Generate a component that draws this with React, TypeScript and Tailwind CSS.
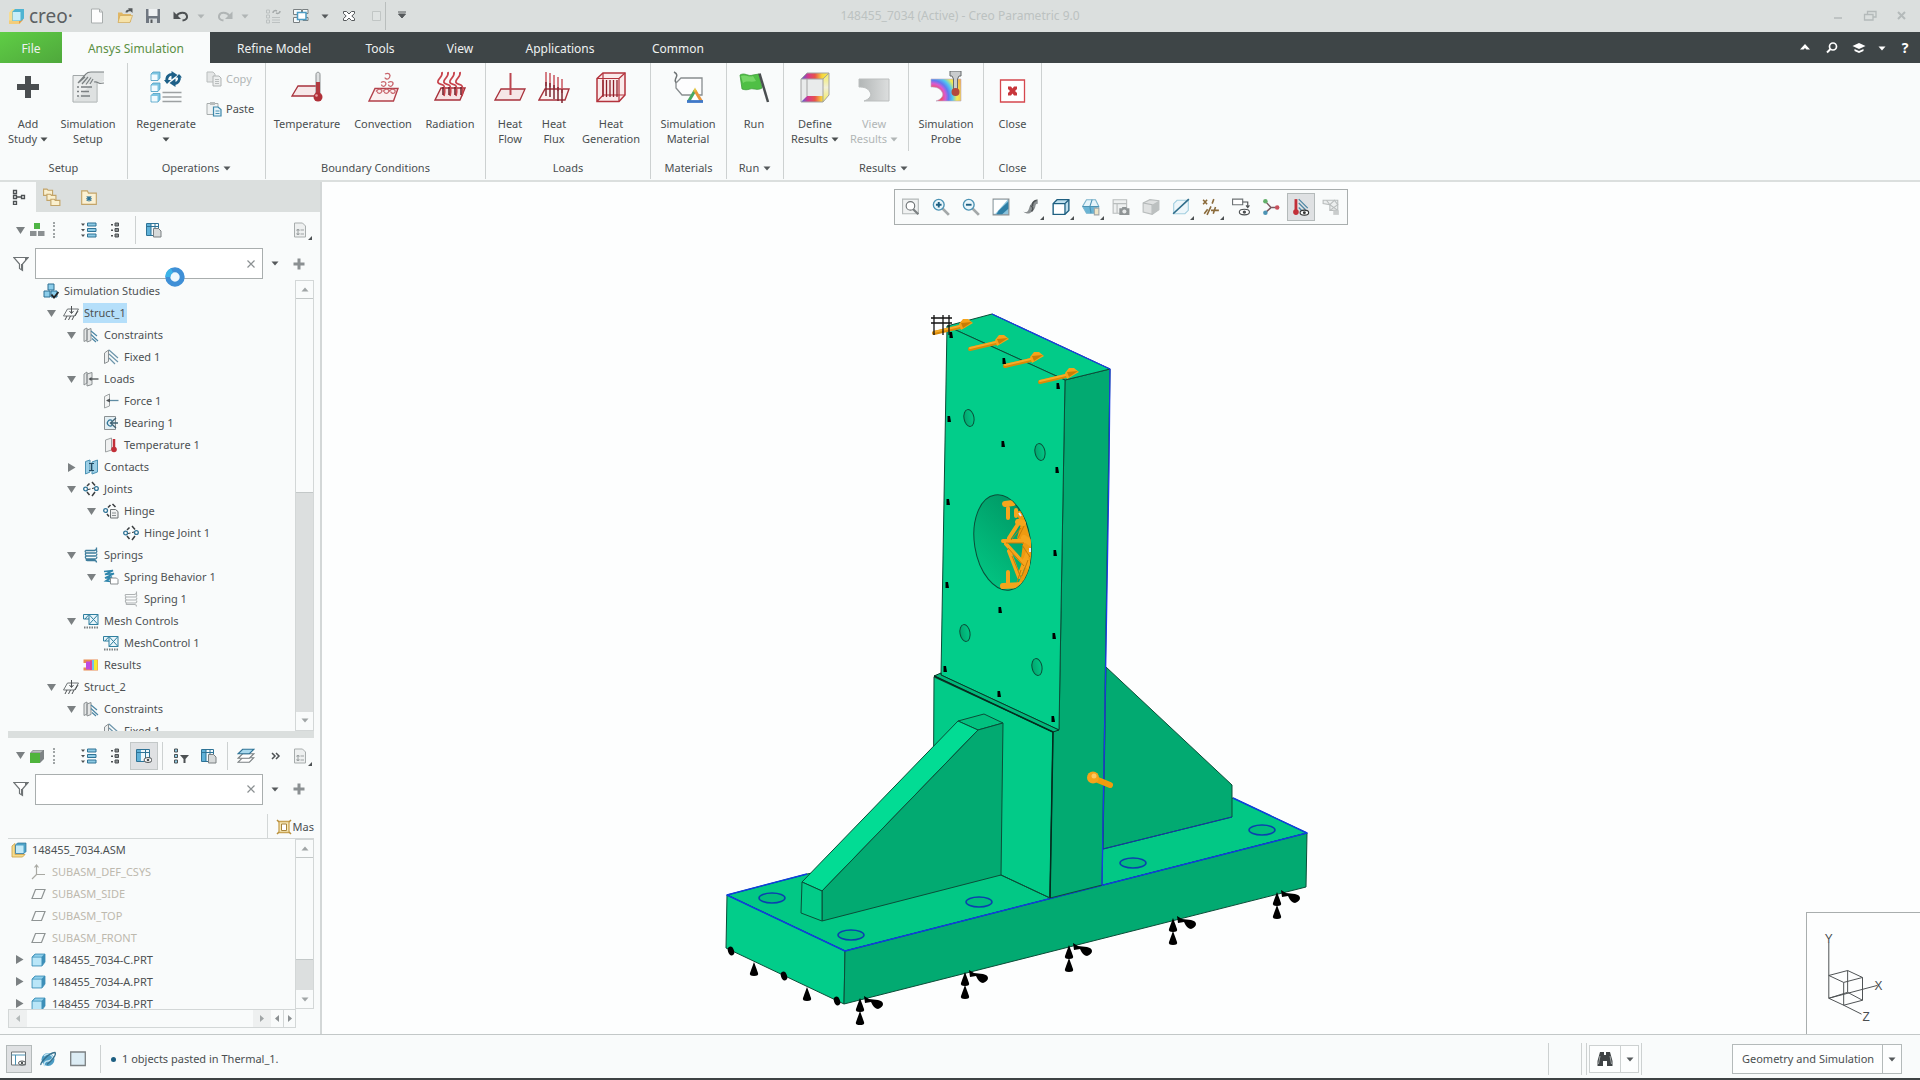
import React, { ReactNode } from 'react';
import clsx from 'clsx';

type IconProps = { children: ReactNode; size?: 16 | 32 | 20 };

const Svg = ({ children, size = 16 }: IconProps) => (
  <svg
    viewBox={size === 32 ? '0 0 32 32' : '0 0 16 16'}
    fill="none"
    className={clsx('shrink-0', size === 32 && 'h-8 w-8', size === 16 && 'h-4 w-4', size === 20 && 'h-[18px] w-[18px]')}
  >
    {children}
  </svg>
);

const Caret = ({ className = 'text-[#55595b]' }: { className?: string }) => (
  <svg viewBox="0 0 8 5" className={clsx('inline-block h-[5px] w-2 shrink-0', className)}>
    <path d="M0.5 0.5h7L4 4.5z" fill="currentColor" />
  </svg>
);

/* ---------- title bar ---------- */

const CreoLogo = () => (
  <svg viewBox="0 0 17 17" fill="none" className="h-[17px] w-[17px]">
    <path d="M1 4.5L4.500 1H9v11h5.500L12 16H1z" fill="#f6dd94" />
    <path d="M1 12.500h10v3.500H1z" fill="#f3cd7a" />
    <path d="M11 16l4-4V9l-4 4z" fill="#e39a48" />
    <path d="M4.500 3.500L7 1h9v9.500L13 13H4.500z" fill="#4fb4d2" />
    <path d="M5 4h7.500v8.500H5z" fill="#c9eef8" />
  </svg>
);

const NewFile = () => (
  <Svg><path d="M2.500 1h8l3 3v11h-11z" fill="#fdfdfd" stroke="#a8adad" /><path d="M10.500 1v3h3" stroke="#a8adad" /></Svg>
);
const OpenFile = () => (
  <Svg>
    <path d="M1 14V4.500h4l1 1.500h8v8z" fill="#e0b765" />
    <path d="M1 14.500l2-7h12.500L13 14.500z" fill="#f6e2a8" stroke="#d0a858" strokeWidth=".7" />
    <path d="M8.500 4.500c0-2 1.500-3 3.500-3L11 .3h4.500V5L14 3.500c-1.500-.5-3 0-3.500 1z" fill="#55595b" />
  </Svg>
);
const SaveFile = () => (
  <Svg>
    <path d="M1 1h14v14H1z" fill="#6f7780" />
    <path d="M3.500 1h9v7h-9z" fill="#eef1f2" />
    <path d="M4 10.500h8V15H4z" fill="#d7dcde" /><path d="M5.500 11.500h2V15h-2z" fill="#55595b" />
  </Svg>
);
const Undo = () => (
  <Svg><path d="M3.500 8C6 4 13 3.500 14 8c.4 2.500-1.500 4-4.500 4.500" stroke="#4d5153" strokeWidth="2" /><path d="M.5 3.500V11h7.500z" fill="#4d5153" /></Svg>
);
const Redo = () => (
  <Svg><path d="M12.500 8C10 4 3 3.500 2 8c-.4 2.500 1.500 4 4.500 4.500" stroke="#b0b5b5" strokeWidth="2" /><path d="M15.500 3.500V11H8z" fill="#b0b5b5" /></Svg>
);
const RegenSmall = () => (
  <Svg>
    <path d="M1.500 2h3v3h-3zM1.500 7h3v3h-3zM1.500 12h3v3h-3zM7 9.500h8M7 12h8M7 14.500h8" stroke="#bcc1c1" />
    <path d="M8 5c0-2 2-3 4-2M15 3c0 2-2 3-4 2" stroke="#a5aaaa" strokeWidth="1.500" />
  </Svg>
);
const Windows = () => (
  <Svg>
    <path d="M.5 1.500h8v5h-8zM.5 9.500h6v5h-6zM9.500 1.500H15v4H9.500zM10 9.500h5v3h-5z" fill="#f6fafb" stroke="#7a8082" />
    <path d="M4.500 4.500h8.500v7H4.500z" fill="#fff" stroke="#4c9cc4" strokeWidth="1.500" />
  </Svg>
);
const CloseWin = () => (
  <Svg><path d="M2.500 3.500h3L8 6l2.500-2.500h3v2L10.800 8l2.700 2.500v2h-3L8 10l-2.500 2.500h-3v-2L5.200 8 2.500 5.500z" fill="#fff" stroke="#55595b" /></Svg>
);
const BlankBox = () => <Svg><path d="M3.500 3.500h8v9h-8z" fill="#dfe3e2" stroke="#c1c6c5" /></Svg>;

/* ---------- ribbon ---------- */

const AddStudy = () => <Svg size={32}><path d="M13 5h6v8h8v6h-8v8h-6v-8H5v-6h8z" fill="#4a4e50" /></Svg>;
const SimSetup = () => (
  <Svg size={32}>
    <path d="M1 4.500h24V31H1z" fill="#eceeee" stroke="#a2a7a8" />
    <path d="M1 31h24V8z" fill="#cfd3d3" opacity=".5" />
    <path d="M5 16h2M5 20.500h2M5 25h2M9 16h11M9 20.500h8M9 25h9" stroke="#7b8082" strokeWidth="1.300" />
    <path d="M6 12l7-8c2-2.500 4-3 7-3h12v9l-4 2c-2 0-4-2-6-1l-3 2z" fill="#dfe2e2" />
    <path d="M6 12l8-9c1-1.500 3-2 5-2h13M6 12l7-6M10 13l6-7M14 13.500l5-7M18 13l3-5M22 11c3-1 4 1 6 1.500l4-.5" stroke="#7b8082" strokeWidth="1.200" />
  </Svg>
);
const cube = (y: number) => (
  <g key={y}>
    <path d={`M1 ${y + 2}l2-2h7v6l-2 2.500H1z`} fill="#7fc6e2" stroke="#4fa0c4" strokeWidth=".8" />
    <path d={`M1.500 ${y + 2.500}h6v5.500h-6z`} fill="#f2fbff" />
  </g>
);
const Regenerate = () => (
  <svg viewBox="0 0 32 32" fill="none" className="h-8 w-8">
    {[1, 12, 22.500].map(cube)}
    <path d="M17 10.500C16 5.500 19 3 23 3.500M29 5c1.500 4-1 7.500-5 7.500" stroke="#1d6088" strokeWidth="2.800" />
    <path d="M21.500 0l6 4-6 4.500zM25.500 7.500v8.500l-6-4z" fill="#1d6088" />
    <path d="M14 9h7l-4 4zM26 6.500h6L29 3z" fill="#1d6088" />
    <path d="M12.500 21.500h19M12.500 26h19M12.500 30.500h19" stroke="#9da1a2" strokeWidth="1.500" />
  </svg>
);
const CopyIcon = () => (
  <Svg><path d="M1 1h6l2 2v8H1z" fill="#e4e6e6" stroke="#b9bdbd" /><path d="M7 5h6l2 2v8H7z" fill="#eceeee" stroke="#b0b4b4" /><path d="M9 8.500h4M9 10.500h4M9 12.500h4" stroke="#b9bdbd" /></Svg>
);
const PasteIcon = () => (
  <Svg>
    <path d="M1 2.500h11v11H1z" fill="#f0f2f2" stroke="#a8adad" /><path d="M4 1h5v3H4z" fill="#b8bcbc" />
    <path d="M7.500 6h4.500L15 8.500V15H7.500z" fill="#e4f3f9" stroke="#3d87aa" strokeWidth="1.200" /><path d="M9.500 10h4M9.500 12.500h4" stroke="#4c93b4" />
  </Svg>
);
const Temperature = () => (
  <Svg size={32}>
    <path d="M7 15h21l-4 10H1z" fill="#f6e8e9" stroke="#a8323c" strokeWidth="1.300" />
    <path d="M25 3.500c0-3 4-3 4 0V23h-4z" fill="#dfe1e2" stroke="#8b8f91" />
    <path d="M25 11h4v13h-4z" fill="#b23a40" />
    <circle cx="27" cy="26" r="4.500" fill="#b03038" /><circle cx="25.500" cy="24.500" r="1.300" fill="#e8a0a4" />
  </Svg>
);
const Convection = () => (
  <Svg size={32}>
    <path d="M8 17.500h23L26.500 30H2z" fill="#fbf1f1" stroke="#b2404a" strokeWidth="1.400" />
    <path d="M18 3c4-2 6 1 4.500 3.500S18 8 18 6.500M14 11.500c3-2 6 0 4.500 2.500s-4 1-4-.5M21 11.500c4-2 6 0 4.500 2.500s-4 1-4-.5M9 20.500c3-4 7-2 5.500.5s-4.500 1-4-.5M16 20.500c3-4 7-2 5.500.5s-4.500 1-4-.5M22 20.500c3-4 7-2 6 .5s-4.500 1-4-.5" stroke="#c9666d" strokeWidth="1.300" />
  </Svg>
);
const Radiation = () => (
  <Svg size={32}>
    <path d="M7 17h24l-5 12H1z" fill="#f6e3e4" stroke="#a8323c" strokeWidth="1.400" />
    {[0, 6, 12, 18].map(x => (
      <path key={x} d={`M${8 + x} 1c1 4-3 6-4 9s3 3 5 4 2 6 1 11`} stroke="#c8444d" strokeWidth="1.800" />
    ))}
    {[9, 15, 21, 27].map(x => <path key={x} d={`M${x} 16v8`} stroke="#6d1f28" strokeWidth="1.500" />)}
  </Svg>
);
const HeatFlow = () => (
  <Svg size={32}><path d="M7 18h24l-5 11H1z" fill="#f6e6e7" stroke="#a8323c" strokeWidth="1.300" /><path d="M16.500 2v22" stroke="#bb4650" strokeWidth="2" /></Svg>
);
const HeatFlux = () => (
  <Svg size={32}>
    <path d="M7 18h24l-4 11H1z" fill="#fbf2f2" stroke="#a8323c" strokeWidth="1.400" />
    {[[8, 1], [12, 2], [16, 4], [20, 6], [24, 8]].map(([x, y]) => (
      <g key={x}><path d={`M${x} ${y}v14`} stroke="#c9555e" strokeWidth="1.500" /><path d={`M${x} ${y + 10}v14`} stroke="#7d2630" strokeWidth="1.500" /></g>
    ))}
  </Svg>
);
const HeatGen = () => (
  <Svg size={32}>
    <path d="M2 7.500L8 2h22v22l-6 6.500H2z" fill="#faeaea" stroke="#b3333c" strokeWidth="1.500" />
    <path d="M2 7.500h22v23M24 7.500L30 2M8 2v22M2 30.500L8 24h22" stroke="#b3333c" strokeWidth="1.200" />
    <path d="M8 9v17M11.500 9v17M15 9v17M18.500 9v17M22 9v17" stroke="#8e1f29" strokeWidth="1.300" />
  </Svg>
);
const SimMaterial = () => (
  <Svg size={32}>
    <path d="M2 1c4 2 3 4 1.500 7S5 13 8 15" stroke="#6e7375" strokeWidth="1.500" />
    <path d="M9 7h21v17H10l-6-7v-5z" fill="#fdfdfe" stroke="#888d8f" strokeWidth="1.300" />
    <path d="M23 17l8.500 15H14.500z" fill="#fff" />
    <path d="M23 19.500l-6.500 11" stroke="#48a860" strokeWidth="3" /><path d="M23 19.500l6.500 11" stroke="#e8953c" strokeWidth="3" /><path d="M15 30.500h16" stroke="#3f78c8" strokeWidth="2.800" />
    <path d="M23 16.500l2 4h-4z" fill="#e0c23c" />
  </Svg>
);
const RunFlag = () => (
  <Svg size={32}>
    <path d="M2 4c5-3 8 2 13 0l6-1 3 14c-5 3-8 0-12 1-3 1-5 1-8 0z" fill="#4fbf45" stroke="#3e9c3a" strokeWidth=".8" />
    <path d="M3 5c5-2 8 2 12 0l3 5c-5 2-9-1-13 2z" fill="#86df76" opacity=".7" />
    <path d="M21.500 2.500L30 31" stroke="#4a4e50" strokeWidth="2.500" />
  </Svg>
);

const DefineResults = () => (
  <Svg size={32}>
    <defs>
      <linearGradient id="def">
        <stop offset="0" stopColor="#4b62e0" /><stop offset=".25" stopColor="#d33a8c" /><stop offset=".5" stopColor="#e8534a" />
        <stop offset=".75" stopColor="#f6d53c" /><stop offset="1" stopColor="#f4ee52" />
      </linearGradient>
      <linearGradient id="side" x2="0" y2="1"><stop stopColor="#f4ec5a" /><stop offset=".5" stopColor="#f1f0d8" /><stop offset="1" stopColor="#f4ec5a" /></linearGradient>
    </defs>
    <path d="M2 8h22v23H2z" fill="#e9ebeb" /><path d="M24 8l6-6v22l-6 7z" fill="url(#side)" />
    <path d="M2 8l6-6h22l-6 6zM2 31l6-6h16v6z" fill="url(#def)" />
    <path d="M2 8l6-6h22v22l-6 7H2zM2 8h22v23M24 8l6-6M8 8v17" stroke="#a3a3a3" />
  </Svg>
);
const resultShape = 'M1 8h30v22H6c6-2 8-6 6-9-2-4-6-5-11-5z';
const ViewResults = () => (
  <Svg size={32}>
    <defs><linearGradient id="vr"><stop stopColor="#b2b6b6" /><stop offset=".4" stopColor="#c3c6c6" /><stop offset="1" stopColor="#dcdede" /></linearGradient></defs>
    <path d={resultShape} fill="url(#vr)" stroke="#bcbfbf" />
  </Svg>
);
const SimProbe = () => (
  <Svg size={32}>
    <defs>
      <radialGradient id="probe" gradientUnits="userSpaceOnUse" cx="2" cy="26" r="32">
        <stop offset=".3" stopColor="#f0506a" /><stop offset=".42" stopColor="#d85ad0" /><stop offset=".52" stopColor="#5f7af0" />
        <stop offset=".64" stopColor="#52c8f0" /><stop offset=".78" stopColor="#f2ea52" /><stop offset="1" stopColor="#f6b24a" />
      </radialGradient>
    </defs>
    <path d={resultShape} fill="url(#probe)" stroke="#b9a7c4" strokeWidth=".6" />
    <path d="M20 0h11v5h-2l-1.500 3v11h-4V8L22 5h-2z" fill="#c9cccd" stroke="#64696b" />
    <circle cx="25.500" cy="21" r="4" fill="#b4483c" />
  </Svg>
);
const CloseIcon = () => (
  <Svg size={32}><path d="M3.500 9h24v22h-24z" fill="#fff" stroke="#d5474e" strokeWidth="1.300" /><path d="M11 15.500h3l1.500 2 1.500-2h3v2.500L18 20l2 2v2.500h-3l-1.500-2-1.500 2h-3V22l2-2-2-2z" fill="#c8373c" /></Svg>
);

/* ---------- side panel ---------- */

const ModelTree = () => <Svg><path d="M1.500 1.500h3v3h-3zM1.500 6.500h3v3h-3zM1.500 12.500h3v3h-3zM9.500 6.500h3v3h-3zM4.500 8h5" stroke="#4d5153" strokeWidth="1.300" /></Svg>;
const Folders = () => (
  <Svg size={20}>{[[0, 1], [3, 5.500], [6.500, 10]].map(([x, y]) => <path key={x} d={`M${x + .5} ${y}h3l1 1h4v4.500h-8z`} fill="#faf0cf" stroke="#c3a468" />)}</Svg>
);
const Favorites = () => (
  <Svg size={20}><path d="M1.500 2.500h5l1 2h7v10h-13z" fill="#fbf1d3" stroke="#c3a468" /><path d="M8 7v5M5.500 9.500h5M6 7.500l4 4M10 7.500l-4 4" stroke="#2f7396" /></Svg>
);
const Blocks = () => <Svg><path d="M5 1h6v6H5z" fill="#4fb445" /><path d="M1 9h6.500v5H1zM9 9h6.500v5H9z" fill="#8b9092" /></Svg>;
const GreenCube = () => <Svg><path d="M1 5l3-3h11v9l-4 4H1z" fill="#7d8384" /><path d="M2 4.500L4.500 2.500H14L11.500 4.500z" fill="#b9bebe" /><path d="M1 5h10v10H1z" fill="#4fb43c" /></Svg>;
const ListWide = () => (
  <Svg>{[1, 6.500, 12].map(y => <g key={y}><path d={`M6.500 ${y}h8.500v3h-8.500z`} fill="#8fcbe4" stroke="#2f7396" /><path d={`M0 ${y + .5}h4L2 ${y + 3}z`} fill="#4d5153" /></g>)}</Svg>
);
const ListNarrow = () => (
  <Svg>{[1, 6.500, 12].map(y => <g key={y}><path d={`M8 ${y}h3.500v3H8z`} fill="#8b9092" stroke="#4d5153" /><path d={`M4 ${y + 1}h2v1.500H4z`} fill="#4d5153" /></g>)}</Svg>
);
const ColumnsDoc = () => (
  <Svg>
    <path d="M.5 1.500h12v12H.5z" fill="#f4fafc" stroke="#2f7396" /><path d="M1 2h4v11H1z" fill="#5fb1d8" />
    <path d="M.5 4.500h12M5 1.500v12M9 1.500v5" stroke="#2f7396" /><path d="M7.500 6.500h5L15 9v6H7.500z" fill="#d7dada" stroke="#7b8082" />
  </Svg>
);
const ColumnsEye = () => (
  <Svg><path d="M.5 1.500h13v12H.5z" fill="#eef7fb" stroke="#2f7396" /><path d="M1 2h4v11H1z" fill="#5fb1d8" /><path d="M.5 4.500h13M9.500 1.500v12" stroke="#2f7396" /><ellipse cx="12" cy="12" rx="4" ry="2.500" fill="#fff" stroke="#4d5153" /><circle cx="12" cy="12" r="1.300" fill="#4d5153" /></Svg>
);
const TreeFilter = () => (
  <Svg><path d="M1.500 1h3v3h-3zM1.500 6.500h3v3h-3zM1.500 12h3v3h-3z" fill="#8fcbe4" stroke="#4d5153" /><path d="M7 7h9l-3.500 4v4h-2v-4z" fill="#4d5153" /></Svg>
);
const Layers = () => (
  <Svg size={20}>
    <path d="M1 13.500l4-4h10l-4 4z" fill="#fff" stroke="#7b8082" /><path d="M1 10l4-4h10l-4 4z" fill="#fff" stroke="#7b8082" />
    <path d="M1 6l4-4h10l-4 4z" fill="#a9d9ee" stroke="#2f7396" />
  </Svg>
);
const DocGrey = () => (
  <Svg><path d="M2.500 1h8l3 3v11h-11z" fill="#eef0f0" stroke="#a8adad" /><path d="M5 7.500h2v1.500H5zM5 11h2v1.500H5zM8.500 8h3.500M8.500 12h3.500" stroke="#9da2a3" /></Svg>
);
const Funnel = () => <Svg><path d="M.8 1.500h14.400L9.500 8v6.500l-3-2V8z" fill="#fff" stroke="#6e7375" strokeWidth="1.200" /><path d="M8 8h1.500v6.500l-1.500-1zM12 1.500h3.200L12 5z" fill="#6e7375" /></Svg>;
const Plus = () => <Svg><path d="M6.500 2.500h3v4h4v3h-4v4h-3v-4h-4v-3h4z" fill="#8b9092" /></Svg>;

const Studies = () => (
  <Svg><path d="M5 1h6v6H5zM1 8h6v6H1zM8 8h6v6H8z" fill="#8ccdea" stroke="#2d6f92" /><path d="M8.500 11.500l2.500 3L15.500 9" stroke="#222" strokeWidth="1.800" /></Svg>
);
const Struct = () => <Svg><path d="M4.500 4h11l-4 7h-11z" stroke="#6e7375" /><path d="M8.500 1v7M6.500 6l2 2.500 2-2.500M4 11l-2 4M7.500 11l-2 4M11 11l-2 4M15 6l-3 5" stroke="#4d5153" /></Svg>;
const Constraint = () => <Svg><path d="M1 2.500L4 1v12l-3 1.500zM4 3l4-1.500v12L4 15z" fill="#e5e7e7" stroke="#8b9092" /><path d="M8 4l6 5M8 7.500l7 6.500M9 11.500l4 3.500" stroke="#4c86a4" strokeWidth="1.200" /></Svg>;
const Fixed = () => <Svg><path d="M1.500 4l4-3v11.500l-4 2z" fill="#edefef" stroke="#8b9092" /><path d="M6 1l9 8M6 5l9 8M6 9l6 6" stroke="#6d95ab" strokeWidth="1.200" /></Svg>;
const Loads = () => <Svg><path d="M1 3l3-2v11l-3 2zM4 3l5-1.500v12L4 15z" fill="#e5e7e7" stroke="#8b9092" /><path d="M7 8h8.500" stroke="#4d5153" strokeWidth="1.300" /><path d="M5.500 8l3-2v4z" fill="#4d5153" /></Svg>;
const Force = () => <Svg><path d="M1.500 3.500l5-2.500v12l-5 2z" fill="#f3f4f4" stroke="#9da2a3" /><path d="M4 7.500h11.500" stroke="#5f8ca3" strokeWidth="1.300" /><path d="M3 7.500l4-2v4z" fill="#4d5153" /></Svg>;
const Bearing = () => <Svg><path d="M1.500 1.500h11v13h-11z" fill="#e3eff4" stroke="#8b9092" /><path d="M9 5.500a3 3 0 1 0 0 5" stroke="#2f7396" strokeWidth="1.200" /><path d="M15 8H7.500M13 3L7.500 8l5.500 5" stroke="#3f6172" strokeWidth="1.300" /></Svg>;
const TempLoad = () => <Svg><path d="M2.500 3l6-2v12l-6 2z" fill="#f0f1f1" stroke="#9da2a3" /><path d="M11 2v9" stroke="#c22f38" strokeWidth="2.500" /><circle cx="11" cy="12.500" r="2.800" fill="#c22f38" /></Svg>;
const Contacts = () => <Svg><path d="M2.500 2.500L7 1v12l-4.500 2zM9 3l5.500-2v12L9 15z" fill="#9ccfe6" stroke="#4c93b4" /><path d="M6 4.500h5M8.500 4.500v7M6 11.500h5" stroke="#234b62" strokeWidth="1.200" /></Svg>;
const Joints = () => (
  <Svg>
    <circle cx="2.600" cy="8" r="1.900" stroke="#2f7396" strokeWidth="1.300" /><circle cx="13.400" cy="7.500" r="1.900" stroke="#2f7396" strokeWidth="1.300" />
    <path d="M5 8.500l2.500-.5M9 7.500l2-.5" stroke="#3a3e40" /><path d="M4 5L6.500 2.500M9 1l3 3.500M4 11l2.500 3M9 15l3-4" stroke="#3a3e40" strokeWidth="1.500" />
  </Svg>
);
const Hinge = () => <Svg><circle cx="2.600" cy="7.500" r="1.900" stroke="#2f7396" strokeWidth="1.300" /><path d="M5 4.500L7.500 2M9.500 1l3 3M4 11l2 2.500" stroke="#3a3e40" strokeWidth="1.500" /><path d="M7.500 6.500h5l2.500 2v6.500H7.500z" fill="#f0f1f1" stroke="#6e7375" /><path d="M9 10h4M9 12.500h4" stroke="#8b9092" /></Svg>;
const springPath = 'M13.500 .5v3M2.500 3.500h9q2-.5 2-2M2.500 3.500q-1 1.500 1 2.500h9q2-1 1-2.500M3 6q-1.500 1.500.5 3h9q2-1 1-2.500M3 9q-1.500 1.500.5 3h9q2-1 1-2.500M3.500 12q-1 1.500 1 1.500h7q2 0 2 2'
const Springs = () => <Svg><path d={springPath} stroke="#3e7d9c" strokeWidth="1.300" /></Svg>;
const Spring = () => <Svg><path d={springPath} stroke="#aeb2b3" strokeWidth="1.100" /></Svg>;
const SpringBehavior = () => <Svg><path d="M1 2.500l9-1-8 4 9-1-9 4.500 7-1-6 4 5 .5" stroke="#2f86ac" strokeWidth="1.700" /><path d="M7.500 9h6l1.500 1.500V15H7.500z" fill="#fff" stroke="#8b9092" /></Svg>;
const Mesh = () => (
  <Svg>
    <path d="M.5 1.500h14.500v10H6V6H.5z" fill="#e8f5fa" stroke="#2f7f9f" /><path d="M6 6V1.500L2 6M6 1.500L15 11.500M15 1.500L6 11.500" stroke="#2f7f9f" />
    <path d="M1 14.500h14" stroke="#7b8082" strokeWidth="2" strokeDasharray="1.500 1" />
  </Svg>
);
const ResultsIcon = () => (
  <Svg><path d="M.5 2.500H15v11H.5v-3h4V6h-4z" fill="#e98b52" /><path d="M3 4.500h4v8H3z" fill="#c04be0" /><path d="M7 3.500h2v9.500H7z" fill="#e0489a" /><path d="M9 3h2v10H9z" fill="#6fc0ee" /><path d="M11 3h3.500v10H11z" fill="#f6ea30" /></Svg>
);
const AsmIcon = () => <Svg><path d="M1 4l3-2.500v11h10L11.500 15H1z" fill="#f6dc8c" stroke="#cfa650" strokeWidth=".9" /><path d="M4.500 3L6.500 1H15v8.500l-2 2H4.500z" fill="#4fa3c8" stroke="#2f7396" strokeWidth=".7" /><path d="M5 3.500h7.500V11H5z" fill="#c3eaf8" /></Svg>;
const Csys = () => <Svg><path d="M5.500 2v8.500H14M5.500 10.500L1 15M3.500 3.500l2-2.500 2 2.500" stroke="#a9a9a3" strokeWidth="1.200" /></Svg>;
const Plane = () => <Svg><path d="M4.500 3.500H14L10.500 12.500H1z" stroke="#8f9494" strokeWidth="1.200" /></Svg>;
const Part = () => <Svg><path d="M1 5l3-3h10v8l-3 4H1z" fill="#3d8fb8" stroke="#3d8fb8" strokeWidth=".8" /><path d="M1.500 5.500h9v8h-9z" fill="#b9e6f8" /><path d="M2 4.800l2.300-2.300H13L10.800 4.800z" fill="#8fd0ec" /></Svg>;
const Master = () => <Svg><path d="M3 2.500h10v11H3z" fill="#f6e8b8" stroke="#c9a454" strokeWidth="1.300" /><path d="M5.500 5h5v6.500h-5z" fill="#fff" stroke="#a8843a" /><path d="M1 1l2 2M15 1l-2 2M1 15l2-2M15 15l-2-2" stroke="#b98f3a" strokeWidth="1.500" /></Svg>;

/* ---------- graphics toolbar ---------- */

const Lens = ({ mark }: { mark: string }) => (
  <Svg size={20}>
    <path d="M9 9l6 6" stroke="#a3a8a9" strokeWidth="2.500" /><circle cx="6" cy="6" r="4.800" fill="#eaf6fb" stroke="#4c93b4" strokeWidth="1.200" />
    <path d={mark} stroke="#1d5f82" strokeWidth="1.700" />
  </Svg>
);
const Refit = () => <Svg size={20}><path d="M.5 1h14v13H.5z" fill="#f0f2f2" stroke="#b4b9b9" /><path d="M9.500 9.500l5 5" stroke="#7b8082" strokeWidth="2" /><circle cx="7.500" cy="7" r="3.800" fill="#fff" stroke="#6e7375" /></Svg>;
const Repaint = () => <Svg size={20}><path d="M1 1h14v14H1z" fill="#8cc3dc" stroke="#8b9092" /><path d="M1.500 1.500h12.500L3 14H1.500z" fill="#fff" /><path d="M14.500 3L6 11l-2 3.500h5l5.500-5z" fill="#2f7fa6" /></Svg>;
const Shading = () => <Svg size={20}><path d="M1 12c5 2 5-3 6-5s3-5 7-6v4c-3 0-1 3-4 6s-5 4-9 1z" fill="#8b9092" /><path d="M7.500 7c2 0 3 3 1 5M13 2c-3 1-4 3-3.500 5" stroke="#4d5153" strokeWidth="1.300" /></Svg>;
const ViewCube = () => <Svg size={20}><path d="M1 5l3.500-3.500H15V11l-3.500 3.500H1z" fill="#bfe0ee" stroke="#1f5f80" strokeWidth="1.200" /><path d="M1 5h10.500v9.500M11.500 5L15 1.500" stroke="#1f5f80" strokeWidth="1.200" /><path d="M1.800 5.800h9v8h-9z" fill="#fff" /></Svg>;
const NamedView = () => <Svg size={20}><path d="M4 1.500h8l3 6-3 6H4l-3.500-6z" fill="#e6f4fa" stroke="#7db4cc" /><path d="M1 8h13l-3 5.500H4z" fill="#6ab4d4" /><path d="M.5 7.500H15M9 1.500l-2 6 1 6" stroke="#4c93b4" /><path d="M11 9h4v6h-4z" fill="#efe6c8" stroke="#a3a8a9" /></Svg>;
const ViewMgr = () => <Svg size={20}><path d="M1 1.500h12v12H1zM1 5h12M4.500 5v8" fill="#eef0f0" stroke="#b9bdbd" /><path d="M6.500 9h9v6h-9zM9 8h4v2H9z" fill="#8f9495" /><circle cx="11" cy="12" r="1.800" fill="#e6e8e8" /></Svg>;
const GreyCube = () => <Svg size={20}><path d="M1 4.500l6-3 8 1v8l-6 4-8-2z" fill="#dfe1e1" stroke="#b9bdbd" /><path d="M1 4.500l8 1.500v8.500" stroke="#b2b6b6" /><path d="M9 6l6-3.500v8l-6 4z" fill="#bcc0c0" /></Svg>;
const Section = () => <Svg size={20}><path d="M1.500 5l3-3h10v9l-3 3h-10z" fill="#edf6fa" stroke="#a3cfe0" /><path d="M1 14L15 1" stroke="#2f6d8a" strokeWidth="1.500" /></Svg>;
const Datum = () => <Svg size={20}><path d="M1 1.500l3.500 4M4.500 1.500L1 5.500M10.500 1L9 5M8 7.500L4.500 15M8 11h7M12 8l-2 6M5 10l-3 4" stroke="#8a6a3a" strokeWidth="1.400" /></Svg>;
const Annot = () => <Svg size={20}><path d="M.5 1h9v5h-9z" fill="#fff" stroke="#6e7375" /><path d="M9.500 3.500H14V8M12.500 6.500L14 8.500l1.500-2" stroke="#4d5153" /><ellipse cx="11" cy="12.500" rx="4.500" ry="2.500" fill="#fff" stroke="#4d5153" /><circle cx="11" cy="12.500" r="1.500" fill="#4d5153" /></Svg>;
const Spin = () => <Svg size={20}><path d="M3 3l5 5.500L3 13M8 8.500h5" stroke="#7a5a62" strokeWidth="1.300" /><circle cx="3" cy="2.800" r="2" fill="#63b06a" /><circle cx="3" cy="13" r="2" fill="#4c93b4" /><circle cx="13.500" cy="8.500" r="2" fill="#c8505c" /></Svg>;
const SimDisplay = () => <Svg size={20}><path d="M3.500 1v10" stroke="#c22f38" strokeWidth="2.500" /><circle cx="3.500" cy="12.500" r="2.500" fill="#c22f38" /><path d="M6 1l8 8M6 4.500l6 6M6 8.500l3 3" stroke="#4c86a4" strokeWidth="1.100" /><ellipse cx="11" cy="13" rx="3.800" ry="2.200" fill="#fff" stroke="#333" /><circle cx="11" cy="13" r="1.300" fill="#333" /></Svg>;
const MeshOff = () => <Svg size={20}><path d="M1 2h13v9H7V6L1 5z" fill="#eceeee" stroke="#b9bdbd" /><path d="M4 2l3 4 4-4 3 4-7 5M7 6l7 5" stroke="#b9bdbd" /><path d="M10 11h5v4h-5z" fill="#c9cccc" /></Svg>;

const viewTools: { name: string; icon: ReactNode; menu?: boolean; active?: boolean }[] = [
  { name: 'Refit', icon: <Refit /> },
  { name: 'Zoom In', icon: <Lens mark="M3.500 6h5M6 3.500v5" /> },
  { name: 'Zoom Out', icon: <Lens mark="M3.500 6h5" /> },
  { name: 'Repaint', icon: <Repaint /> },
  { name: 'Rendering Options', icon: <Shading />, menu: true },
  { name: 'Display Style', icon: <ViewCube />, menu: true },
  { name: 'Saved Orientations', icon: <NamedView />, menu: true },
  { name: 'View Manager', icon: <ViewMgr /> },
  { name: 'Perspective', icon: <GreyCube /> },
  { name: 'Section', icon: <Section />, menu: true },
  { name: 'Datum Display', icon: <Datum />, menu: true },
  { name: 'Annotation Display', icon: <Annot /> },
  { name: 'Spin Center', icon: <Spin /> },
  { name: 'Simulation Display', icon: <SimDisplay />, active: true },
  { name: 'Mesh Display', icon: <MeshOff /> },
];

const CornerMark = () => (
  <svg viewBox="0 0 4 4" className="absolute right-0 bottom-0 h-1 w-1"><path d="M4 0v4H0z" fill="#4d5153" /></svg>
);

/* ---------- title + tabs ---------- */

const TitleBar = () => (
  <header className="relative flex h-8 shrink-0 items-center bg-[#dbdfde] pl-2">
    <CreoLogo />
    <span className="ml-1 w-[60px] text-[19px] leading-5 text-[#5b6062]">creo·</span>
    <div className="flex items-center gap-3">
      <button aria-label="New"><NewFile /></button>
      <button aria-label="Open"><OpenFile /></button>
      <button aria-label="Save"><SaveFile /></button>
      <button aria-label="Undo" className="flex items-center gap-2"><Undo /><Caret className="text-[#b0b5b5]" /></button>
      <button aria-label="Redo" className="flex items-center gap-2"><Redo /><Caret className="text-[#b0b5b5]" /></button>
      <button aria-label="Regenerate" className="ml-1"><RegenSmall /></button>
      <button aria-label="Windows" className="flex items-center gap-3"><Windows /><Caret /></button>
      <button aria-label="Close window"><CloseWin /></button>
      <button aria-label="Blank"><BlankBox /></button>
    </div>
    <div className="h-7 w-px bg-[#b9bebd]" />
    <button aria-label="Customize toolbar" className="ml-3 flex"><Svg><path d="M0 4h8M0.500 6h7L4 10z" stroke="#55595b" fill="#55595b" /></Svg></button>
    <div className="pointer-events-none absolute inset-0 flex items-center justify-center text-[12px] text-[#bcc2c1]">
      148455_7034 (Active) - Creo Parametric 9.0
    </div>
    <div className="relative mr-[10px] ml-auto flex gap-4">
      <button aria-label="Minimize"><Svg><path d="M4 10h8" stroke="#b4baba" strokeWidth="1.500" /></Svg></button>
      <button aria-label="Restore"><Svg><path d="M5.500 6V3.500H14V9h-2.500M2.500 6.500h8.500V12H2.500z" stroke="#b4baba" strokeWidth="1.300" /></Svg></button>
      <button aria-label="Close"><Svg><path d="M4 4l7 7M11 4l-7 7" stroke="#b4baba" strokeWidth="2" /></Svg></button>
    </div>
  </header>
);

const tabs = [
  { name: 'Refine Model', width: 'w-[128px]' },
  { name: 'Tools', width: 'w-[84px]' },
  { name: 'View', width: 'w-[76px]' },
  { name: 'Applications', width: 'w-[124px]' },
  { name: 'Common', width: 'w-[112px]' },
];

const TabBar = () => (
  <nav className="flex h-[31px] shrink-0 items-stretch bg-[#3e4547] text-[12px] text-[#eef1f1]">
    <button className="w-[62px] bg-linear-to-br from-[#5fce45] to-[#4fa83c] pt-[2px]">File</button>
    <button className="w-[148px] bg-[#f9fbfb] pt-[2px] text-[#5b9044]">Ansys Simulation</button>
    {tabs.map(t => <button key={t.name} className={clsx('pt-[2px]', t.width)}>{t.name}</button>)}
    <div className="mr-[7px] ml-auto flex items-center gap-[11px] text-white">
      <button aria-label="Collapse ribbon"><Svg><path d="M3 9.500L8 4l5 5.500H9.500L8 8 6.500 9.500z" fill="currentColor" /></Svg></button>
      <button aria-label="Search"><Svg><circle cx="9" cy="6.500" r="3.500" stroke="currentColor" strokeWidth="1.700" /><path d="M6.500 9L3 12.500" stroke="currentColor" strokeWidth="2" /></Svg></button>
      <button aria-label="Learning"><Svg><path d="M8 3l6.500 3L8 9 1.500 6z" fill="currentColor" /><path d="M3.500 9L8 11l4.500-2v2L8 13l-4.500-2z" fill="currentColor" /></Svg></button>
      <button aria-label="Learning menu"><Caret className="text-white" /></button>
      <button aria-label="Help" className="w-4 text-[14px] font-bold">?</button>
    </div>
  </nav>
);

/* ---------- ribbon layout ---------- */

type RibbonButtonProps = { icon: ReactNode; lines: string[]; width: string; caret?: boolean; disabled?: boolean };

const RibbonButton = ({ icon, lines, width, caret, disabled }: RibbonButtonProps) => (
  <button disabled={disabled} className={clsx('flex flex-col items-center gap-[13px] pt-2', width, disabled ? 'text-[#b1b6b6]' : 'text-[#4a4e50]')}>
    {icon}
    <span className="text-center leading-[15px] whitespace-nowrap">
      {lines.map((l, i) => (
        <span key={l} className="block">
          {l}
          {caret && i === lines.length - 1 && <Caret className={clsx('mb-[2px]', l && 'ml-[3px]')} />}
        </span>
      ))}
    </span>
  </button>
);

const Group = ({ name, width, caret, children }: { name: string; width: string; caret?: boolean; children: ReactNode }) => (
  <section className={clsx('flex flex-col border-r border-[#cdd1d1]', width)}>
    <div className="flex h-[95px] items-start">{children}</div>
    <div className="flex h-5 items-center justify-center gap-1">{name}{caret && <Caret />}</div>
  </section>
);

const Ribbon = () => (
  <div className="flex h-[119px] shrink-0 border-b-2 border-[#dbdfde] bg-[#f9fbfb] pb-px text-[11px] text-[#4a4e50]">
    <Group name="Setup" width="w-32">
      <RibbonButton icon={<AddStudy />} lines={['Add', 'Study']} width="w-14" caret />
      <RibbonButton icon={<SimSetup />} lines={['Simulation', 'Setup']} width="w-16" />
    </Group>
    <Group name="Operations" width="w-[138px]" caret>
      <RibbonButton icon={<Regenerate />} lines={['Regenerate', '']} width="w-[76px]" caret />
      <div className="flex flex-col gap-[14px] pt-2 pl-[2px]">
        <button disabled className="flex h-4 items-center gap-1 text-[#b1b6b6]"><CopyIcon />Copy</button>
        <button className="flex h-4 items-center gap-1"><PasteIcon />Paste</button>
      </div>
    </Group>
    <Group name="Boundary Conditions" width="w-[220px]">
      <RibbonButton icon={<Temperature />} lines={['Temperature']} width="w-[82px]" />
      <RibbonButton icon={<Convection />} lines={['Convection']} width="w-[70px]" />
      <RibbonButton icon={<Radiation />} lines={['Radiation']} width="w-16" />
    </Group>
    <Group name="Loads" width="w-[165px]">
      <RibbonButton icon={<HeatFlow />} lines={['Heat', 'Flow']} width="w-12" />
      <RibbonButton icon={<HeatFlux />} lines={['Heat', 'Flux']} width="w-10" />
      <RibbonButton icon={<HeatGen />} lines={['Heat', 'Generation']} width="w-[74px]" />
    </Group>
    <Group name="Materials" width="w-[76px]">
      <RibbonButton icon={<SimMaterial />} lines={['Simulation', 'Material']} width="w-[74px]" />
    </Group>
    <Group name="Run" width="w-[57px]" caret>
      <RibbonButton icon={<RunFlag />} lines={['Run']} width="w-[54px]" />
    </Group>
    <Group name="Results" width="w-[200px]" caret>
      <RibbonButton icon={<DefineResults />} lines={['Define', 'Results']} width="w-[62px]" caret />
      <RibbonButton icon={<ViewResults />} lines={['View', 'Results']} width="w-14" caret disabled />
      <div className="ml-[6px] h-[88px] w-px bg-[#cdd1d1]" />
      <RibbonButton icon={<SimProbe />} lines={['Simulation', 'Probe']} width="w-[74px]" />
    </Group>
    <Group name="Close" width="w-[58px]">
      <RibbonButton icon={<CloseIcon />} lines={['Close']} width="w-[57px]" />
    </Group>
  </div>
);

/* ---------- trees ---------- */

type Node = { label: string; level: number; icon: ReactNode; state?: 'open' | 'closed'; selected?: boolean; dim?: boolean };

const studyNodes: Node[] = [
  { label: 'Simulation Studies', level: 0, icon: <Studies /> },
  { label: 'Struct_1', level: 1, icon: <Struct />, state: 'open', selected: true },
  { label: 'Constraints', level: 2, icon: <Constraint />, state: 'open' },
  { label: 'Fixed 1', level: 3, icon: <Fixed /> },
  { label: 'Loads', level: 2, icon: <Loads />, state: 'open' },
  { label: 'Force 1', level: 3, icon: <Force /> },
  { label: 'Bearing 1', level: 3, icon: <Bearing /> },
  { label: 'Temperature 1', level: 3, icon: <TempLoad /> },
  { label: 'Contacts', level: 2, icon: <Contacts />, state: 'closed' },
  { label: 'Joints', level: 2, icon: <Joints />, state: 'open' },
  { label: 'Hinge', level: 3, icon: <Hinge />, state: 'open' },
  { label: 'Hinge Joint 1', level: 4, icon: <Joints /> },
  { label: 'Springs', level: 2, icon: <Springs />, state: 'open' },
  { label: 'Spring Behavior 1', level: 3, icon: <SpringBehavior />, state: 'open' },
  { label: 'Spring 1', level: 4, icon: <Spring /> },
  { label: 'Mesh Controls', level: 2, icon: <Mesh />, state: 'open' },
  { label: 'MeshControl 1', level: 3, icon: <Mesh /> },
  { label: 'Results', level: 2, icon: <ResultsIcon /> },
  { label: 'Struct_2', level: 1, icon: <Struct />, state: 'open' },
  { label: 'Constraints', level: 2, icon: <Constraint />, state: 'open' },
  { label: 'Fixed 1', level: 3, icon: <Fixed /> },
];

const modelNodes: Node[] = [
  { label: '148455_7034.ASM', level: 0, icon: <AsmIcon /> },
  { label: 'SUBASM_DEF_CSYS', level: 1, icon: <Csys />, dim: true },
  { label: 'SUBASM_SIDE', level: 1, icon: <Plane />, dim: true },
  { label: 'SUBASM_TOP', level: 1, icon: <Plane />, dim: true },
  { label: 'SUBASM_FRONT', level: 1, icon: <Plane />, dim: true },
  { label: '148455_7034-C.PRT', level: 1, icon: <Part />, state: 'closed' },
  { label: '148455_7034-A.PRT', level: 1, icon: <Part />, state: 'closed' },
  { label: '148455_7034-B.PRT', level: 1, icon: <Part />, state: 'closed' },
];

const studyIndent = ['pl-[23px]', 'pl-[43px]', 'pl-[63px]', 'pl-[83px]', 'pl-[103px]'];
const modelIndent = ['pl-0', 'pl-[11px]'];

const Expander = ({ state }: { state?: Node['state'] }) => (
  <span className="flex w-4 shrink-0 justify-center text-[#7b8082]">
    {state && (
      <button aria-label={state === 'open' ? 'Collapse' : 'Expand'}>
        <svg viewBox="0 0 9 9" className="h-[9px] w-[9px]"><path d={state === 'open' ? 'M0 1h9L4.500 8z' : 'M1 0l7.500 4.500L1 9z'} fill="currentColor" /></svg>
      </button>
    )}
  </span>
);

const Tree = ({ nodes, indent, root }: { nodes: Node[]; indent: string[]; root?: boolean }) => (
  <ul className="min-w-0 flex-1 overflow-hidden">
    {nodes.map((n, i) => (
      <li key={i} className={clsx('flex h-[22px] items-center gap-1 whitespace-nowrap', indent[n.level], n.dim ? 'text-[#bdb9ae]' : 'text-[#4d5153]')}>
        {root && n.level === 0 ? <span className="w-[7px]" /> : <Expander state={n.state} />}
        {n.icon}
        <span className={clsx('px-px leading-5', n.selected && 'bg-[#b5dffa]')}>{n.label}</span>
      </li>
    ))}
  </ul>
);

const Scrollbar = ({ thumb }: { thumb: string }) => (
  <div className="flex w-[19px] shrink-0 flex-col border border-[#d3d7d7] bg-[#dcdfdf]">
    <button aria-label="Scroll up" className="flex h-[18px] shrink-0 items-center justify-center border-b border-[#c3c8c8] bg-[#f9fbfb]"><Caret className="rotate-180 text-[#a0a5a6]" /></button>
    <div className={clsx('border-b border-[#c3c8c8] bg-[#f9fbfb]', thumb)} />
    <div className="flex-1" />
    <button aria-label="Scroll down" className="flex h-[18px] shrink-0 items-center justify-center bg-[#f9fbfb]"><Caret className="text-[#a0a5a6]" /></button>
  </div>
);

const SearchRow = ({ name }: { name: string }) => (
  <div className="flex h-[31px] shrink-0 items-center pl-[13px]">
    <Funnel />
    <div className="ml-[6px] flex h-[31px] w-[228px] items-center border border-[#a9aeae] bg-white">
      <input type="text" aria-label={name} className="h-full min-w-0 flex-1 px-2 outline-none" />
      <button aria-label="Clear" className="mr-[3px]"><Svg><path d="M4.500 4.500l7 7M11.500 4.500l-7 7" stroke="#8b9092" strokeWidth="1.200" /></Svg></button>
    </div>
    <button aria-label="Search options" className="ml-2 flex"><Caret /></button>
    <button aria-label="Add filter" className="ml-3"><Plus /></button>
  </div>
);

const Dots = () => <div className="mr-[26px] ml-2 h-4 border-l-2 border-dotted border-[#a0a5a6]" />;
const Rule = () => <div className="h-7 w-px bg-[#cdd1d1]" />;

const SidePanel = () => (
  <aside className="relative flex w-[322px] shrink-0 flex-col border-r-2 border-[#d3d7d7] bg-[#f9fbfb] text-[11px]">
    <div className="flex h-[30px] shrink-0 bg-[#dbdfde]">
      <button aria-label="Model Tree" className="flex w-9 items-center justify-center bg-[#f9fbfb] pl-1"><ModelTree /></button>
      <button aria-label="Folder Browser" className="flex w-8 items-center justify-center"><Folders /></button>
      <button aria-label="Favorites" className="ml-1 flex w-[34px] items-center justify-center"><Favorites /></button>
    </div>
    <div className="flex h-9 shrink-0 items-center pl-3">
      <Expander state="open" />
      <span className="ml-px"><Blocks /></span>
      <Dots />
      <button aria-label="Expand All"><ListWide /></button>
      <button aria-label="Collapse All" className="ml-[10px]"><ListNarrow /></button>
      <span className="ml-3"><Rule /></span>
      <button aria-label="Tree Columns" className="ml-[10px]"><ColumnsDoc /></button>
      <button aria-label="Tree Settings" className="relative mr-2 ml-auto h-5 w-5"><DocGrey /><CornerMark /></button>
    </div>
    <SearchRow name="Search simulation tree" />
    <div className="flex min-h-0 flex-[450_1_0%] pr-[6px] pt-px">
      <Tree nodes={studyNodes} indent={studyIndent} />
      <Scrollbar thumb="h-[194px]" />
    </div>
    <div className="mr-[6px] ml-2 h-[7px] shrink-0 bg-[#dbdfde]" />
    <div className="flex h-9 shrink-0 items-center pl-3">
      <Expander state="open" />
      <span className="ml-px"><GreenCube /></span>
      <Dots />
      <button aria-label="Expand All"><ListWide /></button>
      <button aria-label="Collapse All" className="ml-[10px]"><ListNarrow /></button>
      <button aria-label="Show Columns" className="ml-[7px] flex h-7 w-7 items-center justify-center border border-[#c3c8c8] bg-[#dfe1e3]"><ColumnsEye /></button>
      <span className="ml-1"><Rule /></span>
      <button aria-label="Tree Filters" className="ml-[10px]"><TreeFilter /></button>
      <button aria-label="Tree Columns" className="ml-3"><ColumnsDoc /></button>
      <span className="ml-[10px]"><Rule /></span>
      <button aria-label="Layers" className="ml-[9px]"><Layers /></button>
      <button aria-label="More" className="ml-4"><Svg><path d="M1 5l3 3-3 3M5 5l3 3-3 3" stroke="#4d5153" strokeWidth="1.500" /></Svg></button>
      <button aria-label="Tree Settings" className="relative mr-2 ml-auto h-5 w-5"><DocGrey /><CornerMark /></button>
    </div>
    <SearchRow name="Search model tree" />
    <div className="mr-[6px] ml-2 flex h-[34px] shrink-0 items-end border-b border-[#d3d7d7]">
      <div className="h-6 w-[263px] border-r border-[#d3d7d7]" />
      <div className="flex h-6 items-center gap-px pt-[3px] pl-2 text-[#4a4e50]"><Master />Mas</div>
    </div>
    <div className="flex min-h-0 flex-[170_1_0%] pr-[6px]">
      <Tree nodes={modelNodes} indent={modelIndent} root />
      <Scrollbar thumb="h-[102px]" />
    </div>
    <div className="mb-[6px] ml-2 flex h-[19px] w-[288px] shrink-0 border border-[#d3d7d7]">
      <button aria-label="Scroll left" className="flex w-[18px] items-center justify-center bg-[#eef0f0]"><Caret className="rotate-90 text-[#b4baba]" /></button>
      <div className="flex-1" />
      <button aria-label="Scroll right" className="flex w-[18px] items-center justify-center bg-[#eef0f0]"><Caret className="-rotate-90 text-[#a0a5a6]" /></button>
      <button aria-label="Column left" className="flex w-3 items-center justify-center"><Caret className="rotate-90 text-[#8b9092]" /></button>
      <button aria-label="Column right" className="flex w-3 items-center justify-center border-l border-[#d3d7d7]"><Caret className="-rotate-90 text-[#8b9092]" /></button>
    </div>
    {/* busy pointer */}
    <svg viewBox="0 0 20 20" className="absolute top-[85px] left-[165px] h-5 w-5">
      <circle cx="10" cy="10" r="7.200" fill="#eef8fd" stroke="#3f8fd6" strokeWidth="5" />
      <path d="M2.800 10A7.200 7.200 0 0 1 7 3.500" fill="none" stroke="#3cb4e8" strokeWidth="5" />
    </svg>
  </aside>
);

/* ---------- model ---------- */

const dots = [
  [951, 335], [1004, 361], [1058, 386], [949, 419], [1003, 444], [1057, 470], [948, 502],
  [1055, 553], [947, 585], [1000, 610], [1054, 636], [945, 669], [999, 694], [1053, 719],
];
const plateHoles = [[969, 418], [1040, 452], [965, 633], [1037, 667]];
const baseHoles = [[772, 898], [851, 935], [979, 902], [1133, 863], [1262, 830]];
const forceArrows = [[934, 333], [970, 349], [1005, 366], [1040, 382]];
const supports = [[860, 999], [965, 973], [1069, 946], [1173, 919], [1277, 893]];

const Cone = ({ x, y }: { x: number; y: number }) => <path d={`M${x} ${y}l4 11q1 3-4 3t-4-3z`} fill="#000" />;

const Model = () => (
  <svg viewBox="322 182 1598 852" className="absolute inset-0 h-full w-full" role="img" aria-label="Bracket assembly">
    <defs>
      <linearGradient id="bore" x1="0.9" x2="0.2" y1="0.1" y2="1"><stop stopColor="#009865" /><stop offset="1" stopColor="#02c582" /></linearGradient>
      <linearGradient id="hole"><stop stopColor="#02a56e" /><stop offset="1" stopColor="#02c987" /></linearGradient>
      <clipPath id="boreClip"><ellipse cx="1002.500" cy="542.500" rx="28" ry="48" transform="rotate(-9 1002.500 542.500)" /></clipPath>
    </defs>
    <g stroke="#0b4d38" strokeWidth="1" strokeLinejoin="round">
      {/* base plate */}
      <path d="M727 895L845 951L1307 833L1233 798L807 874Z" fill="#02c885" />
      <path d="M727 895L845 951L844 1004L726 948Z" fill="#02cd8a" />
      <path d="M845 951L1307 833L1306 887L844 1004Z" fill="#02aa71" />
      <path d="M807 874L727 895L845 951L1307 833L1233 798" fill="none" stroke="#0f3fe0" strokeWidth="1.500" />
      {baseHoles.map(([x, y]) => <ellipse key={x} cx={x} cy={y} rx="13" ry="5" fill="#02bd7e" stroke="#0b3fb0" strokeWidth="1.500" />)}
      {/* rear rib */}
      <path d="M1106 667L1232 785V817L1103 849Z" fill="#02aa71" />
      <path d="M1232 817L1103 849" stroke="#1436b0" />
      {/* upright */}
      <path d="M934 677L1053 732L1050 898L1001 875L933 860Z" fill="#02cb88" />
      <path d="M1065 380L1110 369L1102 885L1050 898L1053 732L1059 729Z" fill="#02aa71" />
      <path d="M947 326L992 314L1110 369L1065 380Z" fill="#02cb88" />
      <path d="M947 326L1065 380L1059 730L941 675Z" fill="#02cd8a" />
      <path d="M941 673L934 676L1053 732L1059 730L941 675Z" fill="#02b87b" stroke="#063a29" />
      <path d="M934 676L1053 732L1050 898" fill="none" stroke="#042b1e" strokeWidth="1.500" />
      <path d="M992 314L1110 369L1109 470L1102 885" fill="none" stroke="#1b3be6" strokeWidth="1.300" />
      {/* front rib */}
      <path d="M958 721L984 714L1003 723L978 730Z" fill="#02c17f" />
      <path d="M958 721L978 730L822 891L802 882Z" fill="#02dc94" />
      <path d="M978 730L1003 723L1001 875L822 921V891Z" fill="#02aa71" />
      <path d="M802 882L822 891V921L801 913Z" fill="#02cb88" />
      {plateHoles.map(([x, y]) => <ellipse key={x} cx={x} cy={y} rx="5" ry="8.500" transform={`rotate(-10 ${x} ${y})`} fill="url(#hole)" />)}
      <ellipse cx="1002.500" cy="542.500" rx="28" ry="48" transform="rotate(-9 1002.500 542.500)" fill="url(#bore)" />
    </g>
    <path d="M1001 875L1050 898" stroke="#0b4d38" />
    {/* bearing load in the bore */}
    <g clipPath="url(#boreClip)">
      <path d="M1016 512l6-2 8 28h3v46l-12 6-2-8 6-14-4-10 2-14-6-6 4-14z" fill="#ee9a10" />
      <g stroke="#f5a51c" strokeLinecap="round">
        <path d="M1008 508v10M1016 510v6M1018 524l-9 14M1003 541h30M1006 544l20 22M1009 551l10 26M1008 572v12M1020 574l8-22" strokeWidth="4" />
        <path d="M1005 504l8-1M1003 586l18-1M1018 522l5 1M1024 538l8 6M1026 560l4 8" strokeWidth="6" />
      </g>
      <path d="M1008 548l16 18M1011 540l10-12M1012 556l9 22M1022 545l8 12M1024 526l-6 12M1017 582l4-12M1006 543h18M1028 560l-6 16" stroke="#c47a08" />
      <path d="M1019 513l2 3M1030 548v4" stroke="#dfe6ff" strokeWidth="2" />
    </g>
    {/* face loads */}
    {forceArrows.map(([x, y]) => (
      <g key={x}>
        <path d={`M${x} ${y}l30 -7`} stroke="#d98a08" strokeWidth="4" strokeLinecap="round" />
        <path d={`M${x} ${y - 1}l30 -7`} stroke="#f6ab28" strokeWidth="2" strokeLinecap="round" />
        <path d={`M${x + 25} ${y - 9}l4 -5h5l5 4-12 7z`} fill="#f5a31a" />
        <path d={`M${x + 27} ${y - 10}l11-1-9 6z`} fill="#c87d06" />
      </g>
    ))}
    <path d="M1093 778l17 7" stroke="#f09c0c" strokeWidth="6" strokeLinecap="round" />
    <circle cx="1093" cy="777.500" r="6" fill="#f5a31a" /><circle cx="1094" cy="776" r="2.500" fill="#ffc860" />
    {/* mesh marker + edge points */}
    <path d="M931 318h21M931 323h21M934 315v20M943 315v20M949 315v20" stroke="#111" strokeWidth="1.300" />
    {dots.map(([x, y]) => <path key={`${x}-${y}`} d={`M${x - 1.500} ${y - 3}h2.500l1 6h-3.500z`} fill="#000" />)}
    {/* fixed supports */}
    {supports.map(([x, y]) => (
      <g key={x}>
        <Cone x={x} y={y - 1} /><Cone x={x} y={y + 12} />
        <path d={`M${x + 4} ${y - 3}l5 3 9 1q5 1 5 4t-5 5q-4 0-7-7l-6 1z`} fill="#000" />
      </g>
    ))}
    <Cone x={754} y={962} /><Cone x={807} y={987} />
    {[[731, 951], [784, 976], [837, 1001]].map(([x, y]) => <ellipse key={x} cx={x} cy={y} rx="3" ry="4.500" transform={`rotate(-20 ${x} ${y})`} fill="#000" />)}
  </svg>
);

const Viewport = () => (
  <main className="relative min-w-0 flex-1 overflow-hidden bg-[#fdfefe]">
    <Model />
    <div className="relative flex justify-center pt-[7px]">
      <div role="toolbar" aria-label="Graphics" className="flex h-9 items-center border border-[#a9aeae] bg-[#f9fbfb] px-px">
        {viewTools.map(t => (
          <button
            key={t.name}
            aria-label={t.name}
            className={clsx('relative mx-px flex h-7 w-7 items-center justify-center border', t.active ? 'border-[#b4baba] bg-[#dfe1e3]' : 'border-transparent')}
          >
            {t.icon}
            {t.menu && <CornerMark />}
          </button>
        ))}
      </div>
    </div>
    <div className="absolute right-0 bottom-0 h-[122px] w-[114px] border-t border-l border-[#a9aeae] bg-[#fdfefe]">
      <svg viewBox="0 0 114 122" className="h-full w-full" fill="none" stroke="#4d5153">
        <path d="M22 30V86L37 93L56 88V65L41 58L22 63L37 70L56 65M37 70V93M41 58V80L22 86M41 80L56 88M22 86L71 73M37 93L55 102" />
        <g stroke="none" fill="#4a4e50" fontSize="12" fontFamily="Liberation Sans">
          <text x="18" y="30">Y</text><text x="68" y="78">X</text><text x="56" y="109">Z</text>
        </g>
      </svg>
    </div>
  </main>
);

/* ---------- status bar ---------- */

const StatusBar = () => (
  <footer className="flex h-[46px] shrink-0 items-center border-t border-b-2 border-t-[#c3c8c8] border-b-[#3e4244] bg-[#f9fbfb] pt-[5px] pl-[6px] text-[11px] text-[#4a4e50]">
    <button aria-label="Navigator" className="flex h-7 w-[26px] items-center justify-center border border-[#b4baba] bg-[#dfe1e3]">
      <Svg><path d="M.5 1h14v13H.5z" fill="#fff" stroke="#6e7375" /><path d="M.5 4h14M4.500 4v10" stroke="#4c93b4" /><ellipse cx="11" cy="12" rx="3.500" ry="2" fill="#fff" stroke="#4d5153" /><circle cx="11" cy="12" r="1.200" fill="#4d5153" /></Svg>
    </button>
    <button aria-label="Browser" className="ml-2"><Svg><circle cx="8" cy="8.500" r="6.500" fill="#4c9cc4" /><path d="M4 5c3-3 6-2 8 0s-1 5-4 5-5 3-3 5" stroke="#bfe3f2" strokeWidth="1.500" /><path d="M1 14C0 12 8 2 15 1.500c2 2-4 9-8 12" stroke="#356f8c" strokeWidth="1.300" /></Svg></button>
    <button aria-label="Full Screen" className="ml-[14px]"><Svg><path d="M.7 1h14.600v13.500H.7z" fill="#dcecf4" stroke="#7b8082" strokeWidth="1.300" /></Svg></button>
    <div className="ml-[14px] h-7 w-px bg-[#cdd1d1]" />
    <p className="ml-[10px] flex items-center gap-[6px]"><span className="h-[5px] w-[5px] rounded-full bg-[#1d5f82]" />1 objects pasted in Thermal_1.</p>
    <div className="mr-[18px] ml-auto flex items-center">
      <div className="h-8 w-px bg-[#cdd1d1]" />
      <div className="ml-8 h-8 w-px bg-[#cdd1d1]" />
      <div className="ml-1 h-8 w-px bg-[#cdd1d1]" />
      <div className="mx-[2px] flex h-7 items-stretch border border-[#cdd1d1] bg-[#fdfefe]">
        <button aria-label="Find" className="flex w-[31px] items-center justify-center border-r border-[#cdd1d1]">
          <Svg><path d="M3 1h4v3h2V1h4l2.500 9v5H10v-5H6v5H.5v-5z" fill="#3f4345" /><path d="M3 5l-1.500 8M13 5l1.500 8" stroke="#9da2a3" /></Svg>
        </button>
        <button aria-label="Find menu" className="flex w-[17px] items-center justify-center"><Caret /></button>
      </div>
      <div className="h-8 w-px bg-[#cdd1d1]" />
      <div className="ml-[90px] flex h-[30px] w-[170px] items-center border border-[#b4baba] bg-[#fdfefe]">
        <select aria-label="Selection filter" className="h-full w-[149px] appearance-none pl-[9px] text-[11px] whitespace-nowrap outline-none">
          <option>Geometry and Simulation</option>
        </select>
        <span className="pointer-events-none flex h-full w-[19px] shrink-0 items-center justify-center border-l border-[#b4baba]"><Caret /></span>
      </div>
    </div>
  </footer>
);

const App: React.FC = () => {
  return (
    <div className="flex h-screen flex-col overflow-hidden bg-[#f9fbfb] font-['Noto_Sans','Open_Sans',sans-serif]">
      <TitleBar />
      <TabBar />
      <Ribbon />
      <div className="flex min-h-0 flex-1">
        <SidePanel />
        <Viewport />
      </div>
      <StatusBar />
    </div>
  );
};

export default App;
